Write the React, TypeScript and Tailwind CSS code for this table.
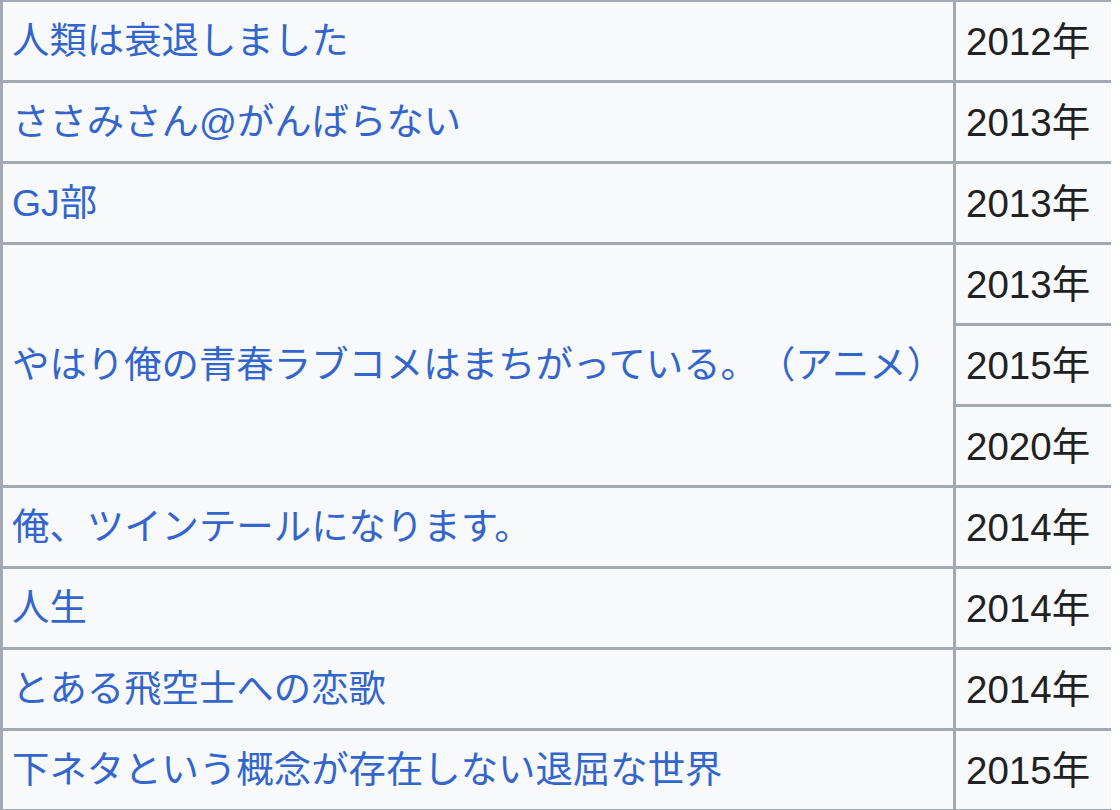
const rows: { title: string; years: string[] }[] = [
  { title: "人類は衰退しました", years: ["2012年"] },
  { title: "ささみさん@がんばらない", years: ["2013年"] },
  { title: "GJ部", years: ["2013年"] },
  { title: "やはり俺の青春ラブコメはまちがっている。（アニメ）", years: ["2013年", "2015年", "2020年"] },
  { title: "俺、ツインテールになります。", years: ["2014年"] },
  { title: "人生", years: ["2014年"] },
  { title: "とある飛空士への恋歌", years: ["2014年"] },
  { title: "下ネタという概念が存在しない退屈な世界", years: ["2015年"] },
];

export default function App() {
  return (
    <div className="w-[1120px] h-[810px] overflow-hidden bg-white">
      <div
        className="grid grid-cols-[950px_155px] auto-rows-[78px] gap-[3px] w-[1111px] bg-[#a2a9b1] pl-[3px] pt-[2px] pb-[3px] text-[37.4px] leading-none [text-spacing-trim:space-all]"
        style={{ fontFamily: '"Liberation Sans", "Noto Sans CJK JP", sans-serif' }}
      >
        {rows.map((row) => (
          <div key={row.title} className="contents">
            <div
              className={
                row.years.length === 3
                  ? "row-span-3 flex items-center bg-[#f8f9fa] pl-[9px] pt-[2px] text-[#3366cc] whitespace-nowrap"
                  : "flex items-center bg-[#f8f9fa] pl-[9px] pt-[2px] text-[#3366cc] whitespace-nowrap"
              }
            >
              {row.title}
            </div>
            {row.years.map((y, i) => (
              <div
                key={row.title + i}
                className="col-start-2 flex items-center bg-[#f8f9fa] pl-[10px] pt-[2px] text-[38.5px] text-[#202122] whitespace-nowrap"
              >
                {y}
              </div>
            ))}
          </div>
        ))}
      </div>
    </div>
  );
}
